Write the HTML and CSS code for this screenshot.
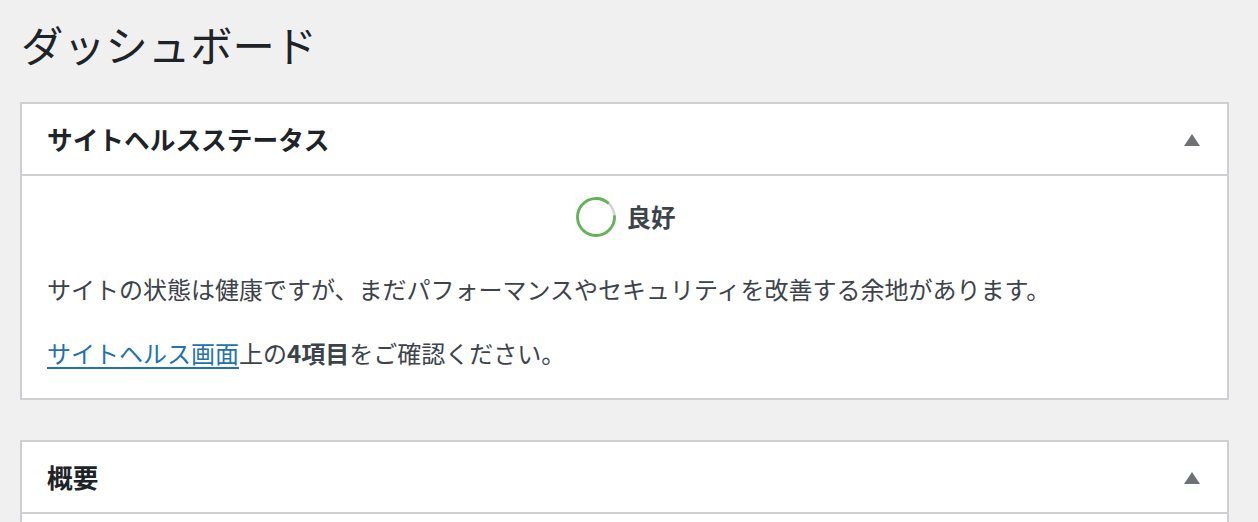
FILE: index.html
```html
<!DOCTYPE html>
<html lang="ja">
<head>
<meta charset="utf-8">
<title>ダッシュボード</title>
<link rel="stylesheet" href="styles.css">
</head>
<body>
<div class="wrap">
  <h1 class="page-title">ダッシュボード</h1>

  <section class="postbox">
    <div class="postbox-header">
      <h2 class="postbox-title">サイトヘルスステータス</h2>
      <span class="toggle-arrow" aria-hidden="true"></span>
    </div>
    <div class="postbox-body">
      <div class="health-status">
        <svg class="health-ring" width="40" height="40" viewBox="0 0 40 40" aria-hidden="true">
          <circle cx="20" cy="20" r="18.5" fill="none" stroke="#d4d4d4" stroke-width="2.6"/>
          <circle cx="20" cy="20" r="18.5" fill="none" stroke="#62b356" stroke-width="2.8"
                  stroke-dasharray="102 200" transform="rotate(-5 20 20)"/>
        </svg>
        <span class="health-label">良好</span>
      </div>
      <p class="health-text">サイトの状態は健康ですが、まだパフォーマンスやセキュリティを改善する余地があります。</p>
      <p class="health-text"><a href="#" class="health-link">サイトヘルス画面</a>上の<strong>4項目</strong>をご確認ください。</p>
    </div>
  </section>

  <section class="postbox">
    <div class="postbox-header">
      <h2 class="postbox-title">概要</h2>
      <span class="toggle-arrow" aria-hidden="true"></span>
    </div>
    <div class="postbox-body postbox-body-empty"></div>
  </section>
</div>
</body>
</html>
```

FILE: styles.css
```css
html, body {
  margin: 0;
  padding: 0;
  background: #f0f0f1;
}

body {
  font-family: "Noto Sans CJK JP", "Noto Sans", sans-serif;
  color: #3c434a;
  overflow: hidden;
  height: 522px;
}

.wrap {
  padding: 0 29px 0 20px;
  display: flex;
  flex-direction: column;
}

.page-title {
  margin: 16px 0 0 1px;
  font-size: 42.3px;
  font-weight: 400;
  line-height: 55px;
  color: #1d2327;
}

.postbox {
  background: #fff;
  border: 2px solid #cdcfd3;
  margin-top: 31px;
}

.postbox + .postbox {
  margin-top: 40px;
}

.postbox-header {
  height: 70px;
  display: flex;
  align-items: center;
  justify-content: space-between;
  padding: 0 27px 0 25px;
  border-bottom: 2px solid #cdcfd3;
}

.postbox-title {
  margin: 0;
  font-size: 25.7px;
  font-weight: 700;
  color: #1d2327;
  line-height: 1;
}

.toggle-arrow {
  width: 0;
  height: 0;
  border-left: 8px solid transparent;
  border-right: 8px solid transparent;
  border-bottom: 12px solid #6e7176;
  margin-top: 2px;
}

.postbox-body {
  padding: 21px 25px 28px;
  display: flex;
  flex-direction: column;
}

.health-status {
  display: flex;
  align-items: center;
  justify-content: center;
  gap: 11px;
  height: 40px;
  padding-left: 2px;
}

.health-ring {
  display: block;
}

.health-label {
  font-size: 24.5px;
  font-weight: 700;
  color: #3c434a;
  line-height: 1;
}

.health-text {
  margin: 35px 0 0;
  font-size: 24px;
  line-height: 34px;
  white-space: nowrap;
}

.health-text + .health-text {
  margin-top: 30px;
}

.health-link {
  color: #2271b1;
  text-decoration: underline;
  text-underline-offset: 4px;
  text-decoration-thickness: 2px;
}

.health-text strong {
  font-weight: 700;
  color: #3c434a;
}

.postbox-body-empty {
  height: 40px;
  padding: 0;
}
```
